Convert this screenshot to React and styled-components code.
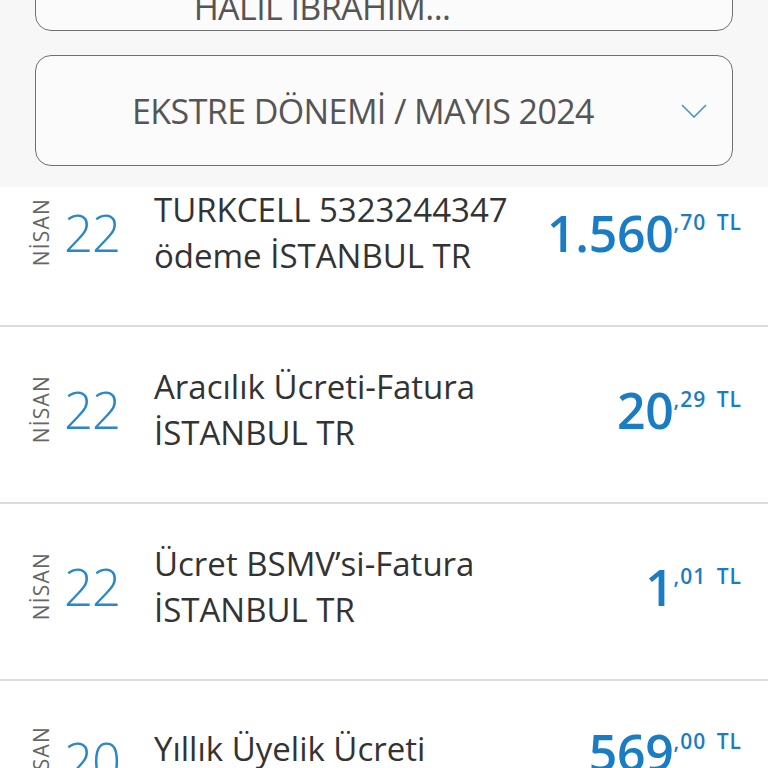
import React from 'react';
import styled, { createGlobalStyle } from 'styled-components';

const GlobalStyle = createGlobalStyle`
  html, body {
    margin: 0;
    padding: 0;
    background: #ffffff;
    font-family: 'Open Sans', 'Noto Sans', sans-serif;
  }
  #root {
    width: 768px;
    height: 768px;
    overflow: hidden;
  }
`;

const Page = styled.div`
  width: 768px;
  height: 768px;
  display: flex;
  flex-direction: column;
  overflow: hidden;
`;

const Header = styled.div`
  background: #f7f7f7;
  display: flex;
  flex-direction: column;
  gap: 24px;
  padding: 0 35px 21px;
  margin-top: -80px;
  position: relative;
  z-index: 1;
`;

const SelectBox = styled.div`
  height: 111px;
  box-sizing: border-box;
  border: 1.5px solid #707070;
  border-radius: 16px;
  background: #fbfbfb;
  display: flex;
  align-items: ${({ bottom }) => (bottom ? 'flex-end' : 'center')};
  justify-content: center;
  padding: ${({ bottom }) => (bottom ? '0 124px 3px 0' : '0 20px')};
  position: relative;
  color: #555;
  font-size: 34px;
  letter-spacing: -0.6px;
  line-height: 40px;
  font-weight: 400;
`;

const BoxLabel = styled.span`
  display: inline-block;
  margin-right: ${({ shift }) => shift || 0}px;
`;

const Chevron = styled.svg`
  position: absolute;
  right: 25px;
  top: 50%;
  margin-top: -7px;
`;

const ListViewport = styled.div`
  flex: 1;
  overflow: hidden;
`;

const List = styled.div`
  margin-top: -37px;
`;

const Row = styled.div`
  height: ${({ short }) => (short ? 140 : 177)}px;
  box-sizing: border-box;
  border-bottom: 2px solid #dcdcdc;
  display: flex;
  align-items: ${({ short }) => (short ? 'flex-start' : 'center')};
  padding: ${({ short }) => (short ? '45px 26px 0 30px' : '0 26px 10px 30px')};
`;

const DateBlock = styled.div`
  display: flex;
  align-items: center;
  width: 124px;
  flex-shrink: 0;
`;

const Month = styled.div`
  writing-mode: vertical-rl;
  transform: rotate(180deg);
  font-size: 21px;
  letter-spacing: 1.2px;
  color: #666;
  font-weight: 400;
  line-height: 22px;
  margin-right: 12px;
`;

const Day = styled.div`
  font-size: 51px;
  font-weight: 300;
  color: #2a87cc;
  line-height: 56px;
  letter-spacing: -1px;
`;

const Desc = styled.div`
  flex: 1;
  font-size: 33px;
  line-height: 46px;
  color: #333;
`;

const Amount = styled.div`
  display: flex;
  align-items: flex-start;
  color: #1a7dc4;
  font-weight: 600;
`;

const Main = styled.span`
  font-size: 50px;
  line-height: 52px;
  letter-spacing: -0.3px;
`;

const Fraction = styled.span`
  font-size: 21px;
  line-height: 20px;
  margin-top: 5px;
  letter-spacing: 1px;
  word-spacing: 4px;
`;

const rows = [
  { day: '22', lines: ['TURKCELL 5323244347', 'ödeme İSTANBUL TR'], main: '1.560', frac: ',70 TL' },
  { day: '22', lines: ['Aracılık Ücreti-Fatura', 'İSTANBUL TR'], main: '20', frac: ',29 TL' },
  { day: '22', lines: ['Ücret BSMV’si-Fatura', 'İSTANBUL TR'], main: '1', frac: ',01 TL' },
  { day: '20', lines: ['Yıllık Üyelik Ücreti'], main: '569', frac: ',00 TL', short: true },
];

const App = () => (
  <Page>
    <GlobalStyle />
    <Header>
      <SelectBox bottom>
        <BoxLabel>HALİL İBRAHİM...</BoxLabel>
      </SelectBox>
      <SelectBox>
        <BoxLabel shift={42}>EKSTRE DÖNEMİ / MAYIS 2024</BoxLabel>
        <Chevron width="26" height="14" viewBox="0 0 26 14">
          <path d="M1 1 L13 13 L25 1" fill="none" stroke="#4b95c0" strokeWidth="1.6" />
        </Chevron>
      </SelectBox>
    </Header>
    <ListViewport>
      <List>
        {rows.map((r, i) => (
          <Row key={i} short={r.short}>
            <DateBlock>
              <Month>NİSAN</Month>
              <Day>{r.day}</Day>
            </DateBlock>
            <Desc>
              {r.lines.map((l, j) => (
                <div key={j}>{l}</div>
              ))}
            </Desc>
            <Amount>
              <Main>{r.main}</Main>
              <Fraction>{r.frac}</Fraction>
            </Amount>
          </Row>
        ))}
      </List>
    </ListViewport>
  </Page>
);

export default App;
